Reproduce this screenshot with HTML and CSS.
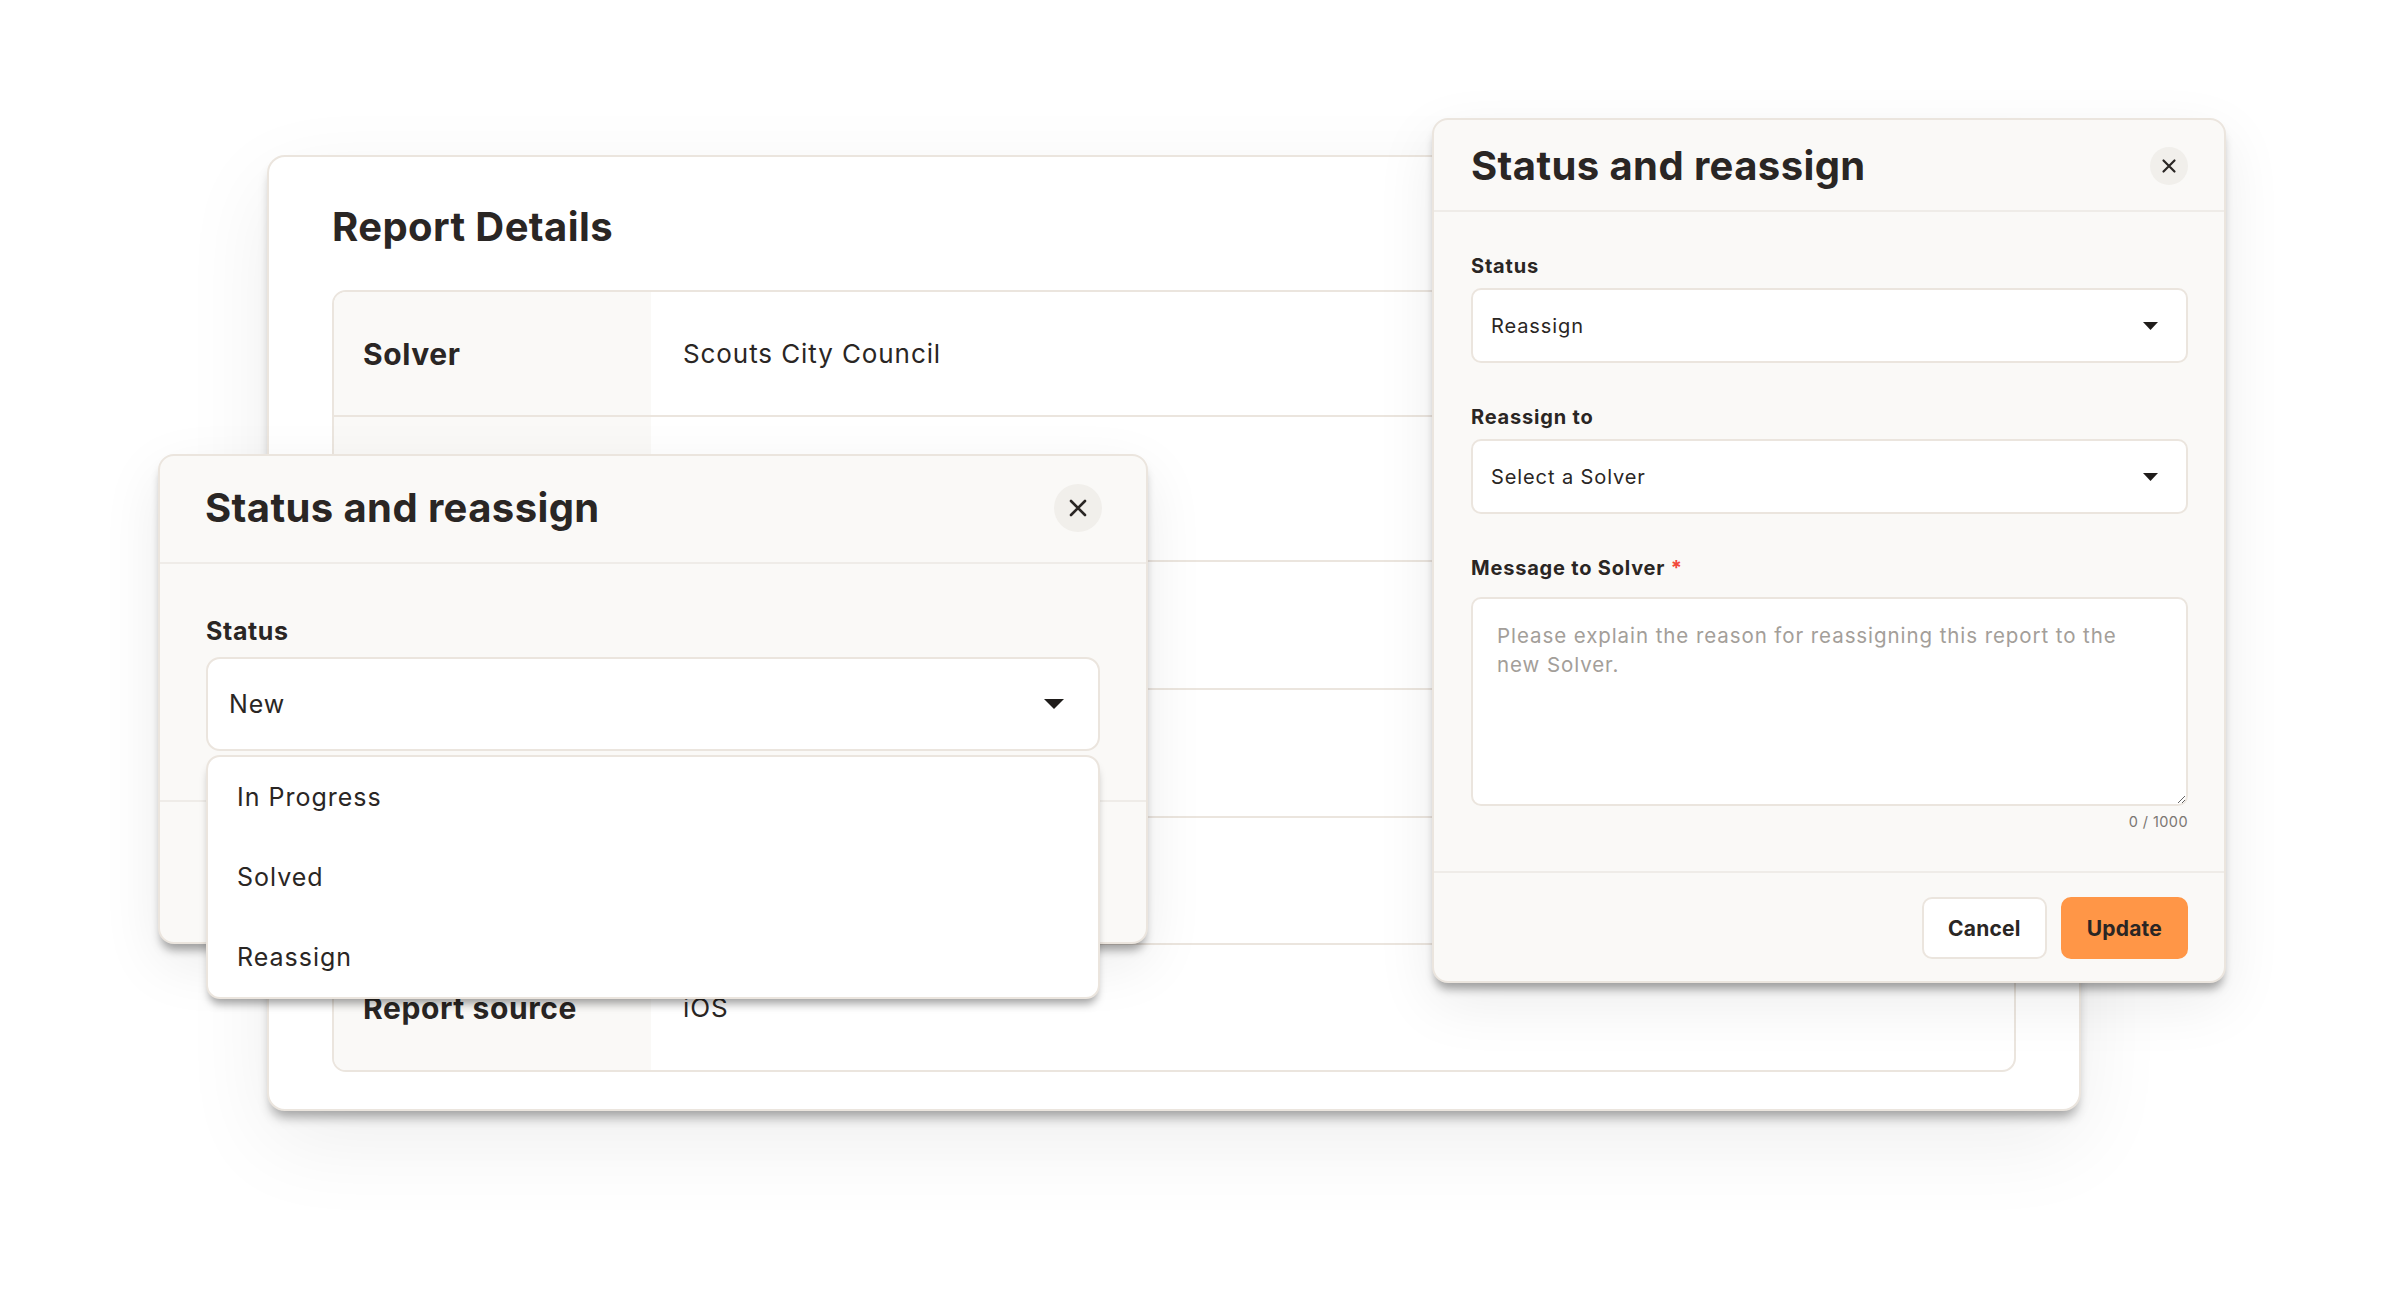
FILE: index.html
```html
<!DOCTYPE html>
<html lang="en">
<head>
    <meta charset="UTF-8">
    <meta name="viewport" content="width=device-width, initial-scale=1.0">
    <title>Report Details - Status and reassign</title>
    <link rel="stylesheet" href="styles.css">
</head>
<body>

<div class="scene">

    <!-- Report details card (background) -->
    <div class="card">
        <h1 class="card-title">Report Details</h1>
        <div class="details">
            <div class="row row-1">
                <div class="label">Solver</div>
                <div class="value">Scouts City Council</div>
            </div>
            <div class="row row-2">
                <div class="label"></div>
                <div class="value"></div>
            </div>
            <div class="row row-3">
                <div class="label"></div>
                <div class="value"></div>
            </div>
            <div class="row row-3">
                <div class="label"></div>
                <div class="value"></div>
            </div>
            <div class="row row-4">
                <div class="label"></div>
                <div class="value"></div>
            </div>
            <div class="row row-4">
                <div class="label">Report source</div>
                <div class="value">iOS</div>
            </div>
        </div>
    </div>

    <!-- Large modal with open dropdown -->
    <div class="modal modal-large">
        <div class="modal-header">
            <h2 class="modal-title">Status and reassign</h2>
            <button class="close-btn" type="button" aria-label="Close">
                <svg width="20" height="20" viewBox="0 0 20 20"><path d="M3 3 L17 17 M17 3 L3 17" stroke="#2a2624" stroke-width="2.6" stroke-linecap="round"/></svg>
            </button>
        </div>
        <div class="modal-body">
            <label class="field-label">Status</label>
            <div class="select-wrap">
                <div class="select">
                    <span>New</span>
                    <svg class="caret" width="20" height="10" viewBox="0 0 20 10"><path d="M0 0 H20 L10 10 Z" fill="#1f1c1a"/></svg>
                </div>
                <ul class="menu">
                    <li>In Progress</li>
                    <li>Solved</li>
                    <li>Reassign</li>
                </ul>
            </div>
        </div>
        <div class="modal-footer">
            <button class="btn btn-cancel" type="button">Cancel</button>
            <button class="btn btn-update" type="button">Update</button>
        </div>
    </div>

    <!-- Reassign modal -->
    <div class="modal modal-small">
        <div class="modal-header">
            <h2 class="modal-title">Status and reassign</h2>
            <button class="close-btn" type="button" aria-label="Close">
                <svg width="16" height="16" viewBox="0 0 16 16"><path d="M2.5 2.5 L13.5 13.5 M13.5 2.5 L2.5 13.5" stroke="#2a2624" stroke-width="2.2" stroke-linecap="round"/></svg>
            </button>
        </div>
        <div class="modal-body">
            <div class="field">
                <label class="field-label">Status</label>
                <div class="select">
                    <span>Reassign</span>
                    <svg class="caret" width="15" height="8" viewBox="0 0 15 8"><path d="M0 0 H15 L7.5 8 Z" fill="#1f1c1a"/></svg>
                </div>
            </div>
            <div class="field">
                <label class="field-label">Reassign to</label>
                <div class="select">
                    <span>Select a Solver</span>
                    <svg class="caret" width="15" height="8" viewBox="0 0 15 8"><path d="M0 0 H15 L7.5 8 Z" fill="#1f1c1a"/></svg>
                </div>
            </div>
            <div class="field field-last">
                <label class="field-label required">Message to Solver <span class="star">*</span></label>
                <textarea class="message" placeholder="Please explain the reason for reassigning this report to the new Solver."></textarea>
                <div class="counter">0 / 1000</div>
            </div>
        </div>
        <div class="modal-footer">
            <button class="btn btn-cancel" type="button">Cancel</button>
            <button class="btn btn-update" type="button">Update</button>
        </div>
    </div>

</div>

</body>
</html>
```

FILE: styles.css
```css
body {
    margin: 0;
    background: #ffffff;
    font-family: "Inter", "Liberation Sans", sans-serif;
    color: #2a2624;
}

.scene {
    position: relative;
    width: 2383px;
    height: 1309px;
    padding: 155px 0 0 267px;
    box-sizing: border-box;
    overflow: hidden;
}

/* Report details card */
.card {
    width: 1814px;
    box-sizing: border-box;
    background: #fff;
    border: 2px solid #ebe5de;
    border-radius: 18px;
    padding: 46px 63px 37px 63px;
    box-shadow: 0 10px 12px -4px rgba(0,0,0,0.34), 0 30px 90px rgba(0,0,0,0.07);
}

.card-title {
    margin: 0 0 39px 0;
    font-size: 40px;
    line-height: 48px;
    font-weight: 700;
    letter-spacing: 0.01em;
}

.details {
    border: 2px solid #ebe5de;
    border-radius: 14px;
    overflow: hidden;
}

.row {
    display: flex;
    border-top: 2px solid #ebe5de;
}
.row:first-child {
    border-top: none;
}
.row-1 { height: 123px; }
.row-2 { height: 143px; }
.row-3 { height: 126px; }
.row-4 { height: 125px; }

.label {
    width: 317px;
    box-sizing: border-box;
    flex-shrink: 0;
    background: #faf9f7;
    padding-left: 29px;
    display: flex;
    align-items: center;
    font-size: 30px;
    font-weight: 700;
    letter-spacing: 0.02em;
}

.value {
    flex: 1;
    padding-left: 32px;
    display: flex;
    align-items: center;
    font-size: 26px;
    letter-spacing: 0.035em;
}

/* Modals */
.modal {
    position: absolute;
    box-sizing: border-box;
    background: #faf9f7;
    border: 2px solid #ebe5de;
    border-radius: 16px;
    box-shadow: 0 9px 10px -3px rgba(0,0,0,0.35), 0 20px 60px rgba(0,0,0,0.08);
}

.modal-header {
    display: flex;
    align-items: center;
    justify-content: space-between;
    border-bottom: 2px solid #efece8;
}

.modal-title {
    margin: 0;
    font-size: 40px;
    line-height: 48px;
    font-weight: 700;
    letter-spacing: 0.01em;
}

.close-btn {
    border: none;
    border-radius: 50%;
    background: #f1efeb;
    display: flex;
    align-items: center;
    justify-content: center;
    padding: 0;
}

.select {
    box-sizing: border-box;
    display: flex;
    align-items: center;
    justify-content: space-between;
    background: #fff;
    border: 2px solid #ebe5de;
}

.field-label {
    display: block;
    font-weight: 700;
    letter-spacing: 0.01em;
}

.btn {
    font-family: inherit;
    font-weight: 700;
    color: #2a2624;
    border-radius: 10px;
    box-sizing: border-box;
    letter-spacing: 0.01em;
}
.btn-cancel {
    background: #fff;
    border: 2px solid #ebe5de;
}
.btn-update {
    background: #ff9647;
    border: 2px solid #ff9647;
}

/* Large modal */
.modal-large {
    left: 158px;
    top: 454px;
    width: 990px;
    height: 490px;
}
.modal-large .modal-header {
    padding: 28px 44px 30px 45px;
}
.modal-large .close-btn {
    width: 48px;
    height: 48px;
}
.modal-large .modal-body {
    padding: 52px 46px 49px 46px;
}
.modal-large .field-label {
    font-size: 25px;
    line-height: 30px;
    margin-bottom: 11px;
    letter-spacing: 0.025em;
}
.modal-large .select {
    height: 94px;
    border-radius: 14px;
    padding: 0 34px 0 21px;
    font-size: 25px;
    letter-spacing: 0.035em;
}
.modal-large .modal-footer {
    border-top: 2px solid #efece8;
    display: flex;
    justify-content: flex-end;
    gap: 18px;
    padding: 30px 46px;
}
.modal-large .btn {
    height: 80px;
    padding: 0 30px;
    font-size: 26px;
}

.select-wrap {
    position: relative;
}

.menu {
    position: absolute;
    left: 0;
    right: 0;
    top: 98px;
    margin: 0;
    padding: 0;
    list-style: none;
    background: #fff;
    border: 2px solid #ebe5de;
    border-radius: 14px;
    box-shadow: 0 8px 9px -3px rgba(0,0,0,0.35);
    z-index: 2;
}
.menu li {
    height: 80px;
    display: flex;
    align-items: center;
    padding-left: 29px;
    font-size: 25px;
    letter-spacing: 0.04em;
}

/* Small modal */
.modal-small {
    left: 1432px;
    top: 118px;
    width: 794px;
    height: 865px;
}
.modal-small .modal-header {
    padding: 22px 36px 20px 37px;
}
.modal-small .close-btn {
    width: 38px;
    height: 38px;
}
.modal-small .modal-body {
    padding: 42px 36px 39px 37px;
}
.modal-small .field {
    margin-bottom: 42px;
}
.modal-small .field-last {
    margin-bottom: 0;
}
.modal-small .field-label {
    font-size: 20px;
    line-height: 24px;
    margin-bottom: 10px;
    letter-spacing: 0.04em;
}
.modal-small .field-label.required {
    margin-bottom: 17px;
}
.star {
    color: #f2493a;
}
.modal-small .select {
    height: 75px;
    border-radius: 10px;
    padding: 0 28px 0 18px;
    font-size: 20px;
    letter-spacing: 0.045em;
}

.message {
    display: block;
    width: 100%;
    height: 209px;
    box-sizing: border-box;
    border: 2px solid #ebe5de;
    border-radius: 10px;
    background: #fff;
    padding: 22px 24px;
    font-family: inherit;
    font-size: 20.5px;
    line-height: 29px;
    letter-spacing: 0.045em;
    color: #2a2624;
    resize: vertical;
}
.message::placeholder {
    color: #a39e99;
}

.counter {
    margin-top: 6px;
    text-align: right;
    font-size: 14.5px;
    line-height: 20px;
    color: #7b7672;
    letter-spacing: 0.03em;
}

.modal-small .modal-footer {
    border-top: 2px solid #efece8;
    display: flex;
    justify-content: flex-end;
    gap: 14px;
    padding: 24px 36px 23px 37px;
}
.modal-small .btn {
    height: 62px;
    padding: 0 24px;
    font-size: 21px;
}
```
